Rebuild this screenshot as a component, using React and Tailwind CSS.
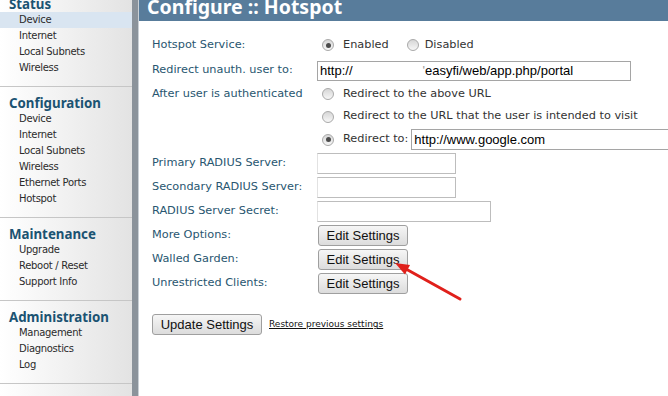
const sections = [
  { title: 'Status', items: ['Device', 'Internet', 'Local Subnets', 'Wireless'], first: true },
  { title: 'Configuration', items: ['Device', 'Internet', 'Local Subnets', 'Wireless', 'Ethernet Ports', 'Hotspot'] },
  { title: 'Maintenance', items: ['Upgrade', 'Reboot / Reset', 'Support Info'] },
  { title: 'Administration', items: ['Management', 'Diagnostics', 'Log'] },
];

const Radio = ({ checked }) => (
  <span className="flex h-[12px] w-[12px] shrink-0 items-center justify-center rounded-full border border-[#a9a9a9] bg-linear-to-b from-[#d6d6d6] to-[#f7f7f7]">
    {checked && <span className="h-[5px] w-[5px] rounded-full bg-[#4b4b4b]" />}
  </span>
);

const EditButton = () => (
  <button
    type="button"
    className="ml-[1px] h-[21px] w-[90px] rounded-[3px] border border-[#9f9f9f] bg-linear-to-b from-[#f6f6f6] to-[#dcdcdc] font-['Liberation_Sans',Arial,sans-serif] text-[13px] leading-none text-[#111]"
  >
    Edit Settings
  </button>
);

const Label = ({ children }) => (
  <div className="w-[165px] shrink-0 text-[#285670]">{children}</div>
);

export default function App() {
  return (
    <div className="relative flex h-[396px] w-[668px] overflow-hidden bg-white font-['DejaVu_Sans',sans-serif]">
      {/* sidebar */}
      <div className="w-[132px] shrink-0 bg-linear-to-r from-white to-[#e3e3e3]">
        {sections.map((s) => (
          <div
            key={s.title}
            className={`border-b border-[#c6c6c6] pb-[10px] ${s.first ? 'pt-0' : 'pt-[8px]'}`}
          >
            <div
              className={`h-4 pl-[9px] font-['Noto_Sans',sans-serif] text-[13.3px] font-bold leading-4 text-[#1b5372] ${
                s.first ? '-mt-[4px]' : ''
              }`}
            >
              {s.title}
            </div>
            {s.items.map((item, i) => (
              <div
                key={item}
                className={`h-4 pl-[19px] text-[10px] leading-4 tracking-[-0.3px] text-[#2b2b2b] ${
                  s.first && i === 0 ? 'bg-[#d9e5f1]' : ''
                }`}
              >
                {item}
              </div>
            ))}
          </div>
        ))}
      </div>

      {/* divider */}
      <div className="w-[6px] shrink-0 bg-[#8b939b]" />
      <div className="w-px shrink-0 bg-[#c9d0d6]" />

      {/* main */}
      <div className="flex-1 overflow-hidden">
        <div className="h-[21px] overflow-hidden bg-[#587c9b] pl-[8px]">
          <div className="-mt-[3px] whitespace-nowrap font-['Noto_Sans',sans-serif] text-[19.5px] font-bold leading-[20px] text-white">
            Configure :: Hotspot
          </div>
        </div>

        <div className="pl-[13px] pt-[11px] text-[11.3px] text-[#333]">
          <div className="flex h-[26px] items-center">
            <Label>Hotspot Service:</Label>
            <div className="ml-[5px] flex items-center">
              <Radio checked />
              <span className="ml-[9px]">Enabled</span>
              <span className="ml-[18px]">
                <Radio />
              </span>
              <span className="ml-[6px]">Disabled</span>
            </div>
          </div>

          <div className="flex h-[25px] items-center">
            <Label>Redirect unauth. user to:</Label>
            <div className="flex h-[20px] w-[314px] items-center whitespace-nowrap border border-[#a5a5a5] pl-[2px] font-['Liberation_Sans',Arial,sans-serif] text-[13px] text-black">
              <span>http://</span>
              <span className="ml-[70px] text-[#9a9a9a]">'</span>
              <span>easyfi/web/app.php/portal</span>
            </div>
          </div>

          <div className="flex">
            <div className="flex h-[22px] items-center">
              <Label>After user is authenticated</Label>
            </div>
            <div className="flex flex-col">
              <div className="flex h-[22px] items-center pl-[5px]">
                <Radio />
                <span className="ml-[9px]">Redirect to the above URL</span>
              </div>
              <div className="flex h-[23px] items-center pl-[5px]">
                <Radio />
                <span className="ml-[9px] whitespace-nowrap">
                  Redirect to the URL that the user is intended to visit
                </span>
              </div>
              <div className="flex h-[23px] items-center pl-[5px]">
                <Radio checked />
                <span className="ml-[9px] whitespace-nowrap">Redirect to:</span>
                <div className="ml-[3px] flex h-[21px] w-[280px] shrink-0 items-center border border-[#a5a5a5] pl-[2px] font-['Liberation_Sans',Arial,sans-serif] text-[13px] text-black">
                  http://www.google.com
                </div>
              </div>
            </div>
          </div>

          <div className="flex h-6 items-center">
            <Label>Primary RADIUS Server:</Label>
            <div className="h-[21px] w-[139px] border border-[#bdbdbd] border-l-[#e2e2e2]" />
          </div>
          <div className="flex h-6 items-center">
            <Label>Secondary RADIUS Server:</Label>
            <div className="h-[21px] w-[139px] border border-[#bdbdbd] border-l-[#e2e2e2]" />
          </div>
          <div className="flex h-6 items-center">
            <Label>RADIUS Server Secret:</Label>
            <div className="h-[21px] w-[174px] border border-[#bdbdbd] border-l-[#e2e2e2]" />
          </div>
          <div className="flex h-6 items-center">
            <Label>More Options:</Label>
            <EditButton />
          </div>
          <div className="flex h-6 items-center">
            <Label>Walled Garden:</Label>
            <EditButton />
          </div>
          <div className="flex h-6 items-center">
            <Label>Unrestricted Clients:</Label>
            <EditButton />
          </div>

          <div className="mt-[19px] flex items-center">
            <button
              type="button"
              className="h-[21px] w-[110px] rounded-[3px] border border-[#9f9f9f] bg-linear-to-b from-[#f6f6f6] to-[#dcdcdc] font-['Liberation_Sans',Arial,sans-serif] text-[13px] leading-none text-[#111]"
            >
              Update Settings
            </button>
            <a href="#" className="ml-[7px] mt-[1px] text-[9px] text-[#111] underline">
              Restore previous settings
            </a>
          </div>
        </div>
      </div>

      {/* annotation arrow */}
      <svg
        className="pointer-events-none absolute left-0 top-0"
        width="668"
        height="396"
        viewBox="0 0 668 396"
      >
        <line x1="460" y1="299" x2="406" y2="269" stroke="#e0201b" strokeWidth="3" strokeLinecap="round" />
        <polygon points="395,263 410,265 405,274.5" fill="#e0201b" />
      </svg>
    </div>
  );
}
